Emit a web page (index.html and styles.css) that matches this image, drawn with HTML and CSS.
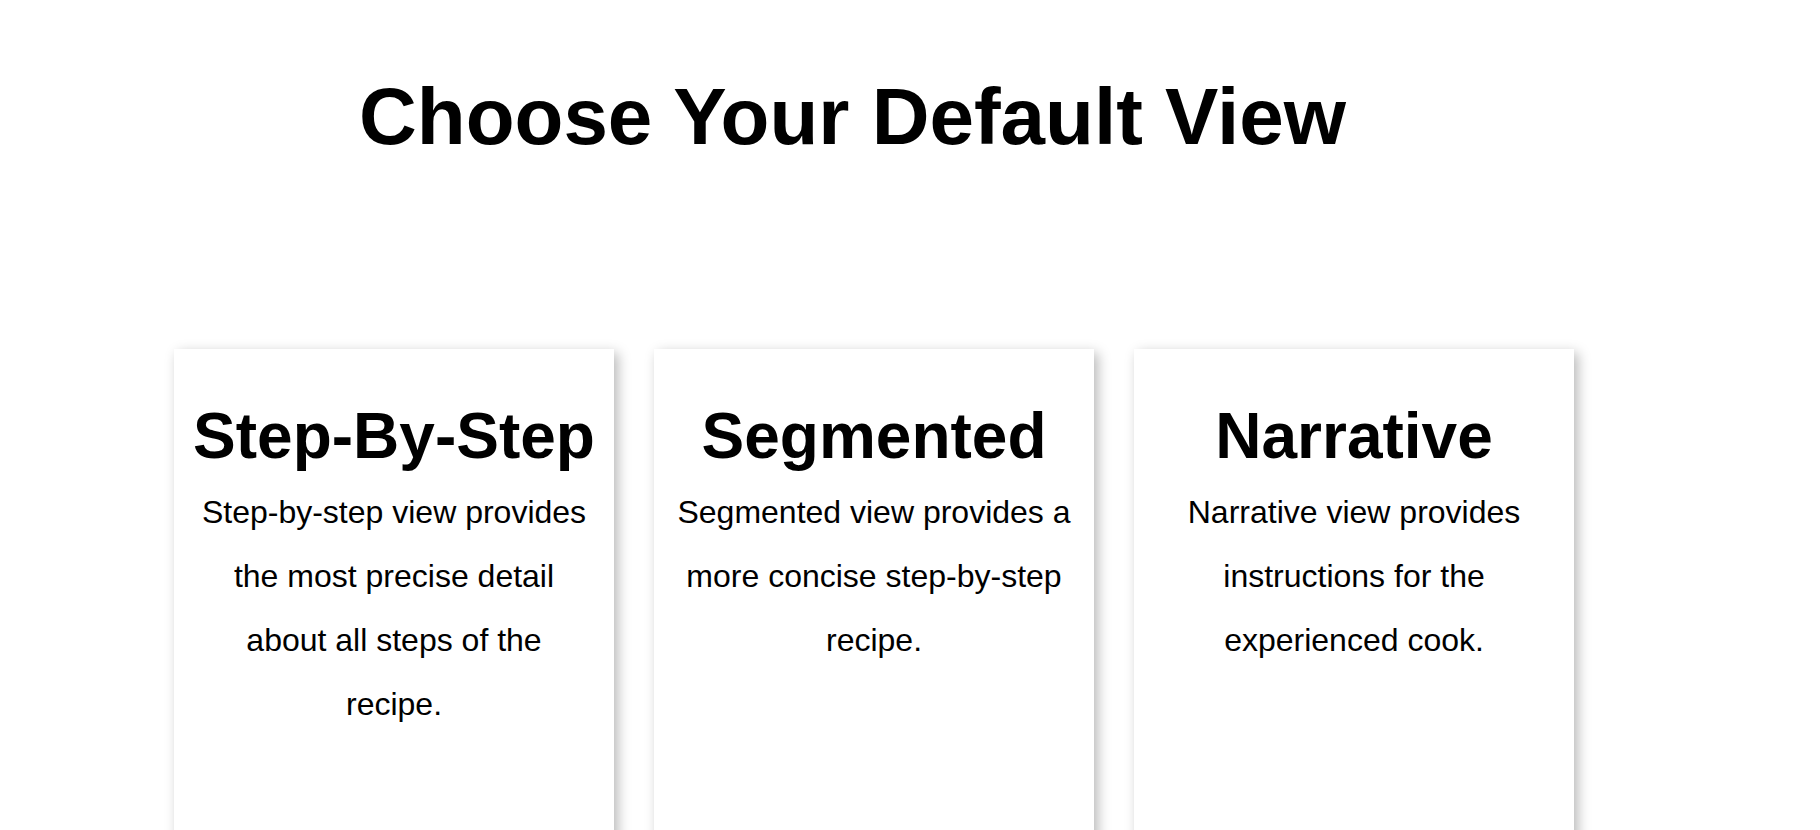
FILE: index.html
```html
<!DOCTYPE html>
<html lang="en">
<head>
<meta charset="utf-8">
<title>Choose Your Default View</title>
<link rel="stylesheet" href="styles.css">
</head>
<body>
<main class="page">
  <header class="page-header">
    <h1 class="page-title">Choose Your Default View</h1>
  </header>
  <section class="views">
    <article class="view-card">
      <h2 class="view-title">Step-By-Step</h2>
      <p class="view-text">Step-by-step view provides the most precise detail about all steps of the recipe.</p>
    </article>
    <article class="view-card">
      <h2 class="view-title">Segmented</h2>
      <p class="view-text">Segmented view provides a more concise step-by-step recipe.</p>
    </article>
    <article class="view-card">
      <h2 class="view-title">Narrative</h2>
      <p class="view-text">Narrative view provides instructions for the experienced cook.</p>
    </article>
  </section>
</main>
</body>
</html>
```

FILE: styles.css
```css
html, body {
  margin: 0;
  padding: 0;
  background: #ffffff;
}

body {
  font-family: "Liberation Sans", Arial, sans-serif;
  color: #000000;
  overflow: hidden;
}

.page {
  display: flex;
  flex-direction: column;
}

.page-header {
  padding: 71px 0 0 359px;
}

.page-title {
  margin: 0;
  font-size: 80px;
  line-height: 92px;
  font-weight: 700;
}

.views {
  display: flex;
  gap: 40px;
  padding: 186px 0 0 174px;
}

.view-card {
  width: 440px;
  height: 560px;
  box-sizing: border-box;
  padding: 50px 0 0;
  background: #ffffff;
  box-shadow: 4px 4px 12px rgba(0, 0, 0, 0.28);
  text-align: center;
}

.view-title {
  margin: 0 0 7px;
  font-size: 64px;
  line-height: 74px;
  font-weight: 700;
  white-space: nowrap;
}

.view-text {
  margin: 0;
  padding: 0 20px;
  font-size: 32px;
  line-height: 64px;
}
```
